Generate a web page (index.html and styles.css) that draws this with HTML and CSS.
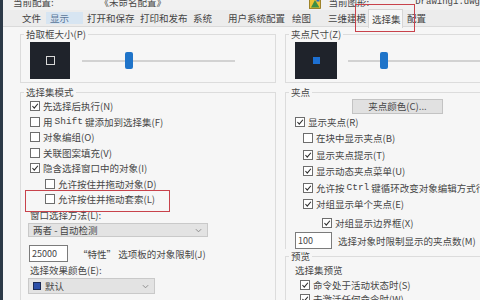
FILE: index.html
```html
<!DOCTYPE html>
<html lang="zh-CN">
<head>
<meta charset="utf-8">
<title>选项 - 选择集</title>
<link rel="stylesheet" href="styles.css">
</head>
<body>
<div class="page">
  <div class="hdr">
    <div class="hdr-in">
      <span class="h1">当前配置:</span>
      <span class="h2">《未命名配置》</span>
      <svg class="hicon" viewBox="0 0 12 12"><rect x="0.5" y="0.5" width="11" height="11" fill="#f0c234" stroke="#8a6d10" stroke-width="0.8"/><path d="M2 10.5 L6 3 L10.5 10.5 Z" fill="#3f8f45"/><rect x="7.5" y="1.5" width="3" height="3" fill="#2f6fc0"/></svg>
      <span class="h3">当前图形:</span>
      <span class="h4">Drawing1.dwg</span>
    </div>
  </div>

  <div class="tabs">
    <div class="tab">文件</div>
    <div class="tab hl">显示</div>
    <div class="tab">打开和保存</div>
    <div class="tab">打印和发布</div>
    <div class="tab">系统</div>
    <div class="tab">用户系统配置</div>
    <div class="tab">绘图</div>
    <div class="tab">三维建模</div>
    <div class="tab active">选择集</div>
    <div class="tab">配置</div>
  </div>

  <div class="content">
    <div class="col left">
      <div class="grp gtop">
        <div class="gt">拾取框大小(P)</div>
        <div class="size-row">
          <div class="preview pv1"><span class="pick"></span></div>
          <div class="slider s1"><span class="thumb t1"></span></div>
        </div>
      </div>

      <div class="grp gmain">
        <div class="gt">选择集模式</div>
        <div class="row"><span class="cb"><svg viewBox="0 0 10 10"><polyline points="1.8,5 4.1,7.6 8.6,2.2"/></svg></span>先选择后执行(N)</div>
        <div class="row"><span class="cb"></span>用 <span class="mono">Shift</span> 键添加到选择集(F)</div>
        <div class="row"><span class="cb"></span>对象编组(O)</div>
        <div class="row"><span class="cb"></span>关联图案填充(V)</div>
        <div class="row"><span class="cb"><svg viewBox="0 0 10 10"><polyline points="1.8,5 4.1,7.6 8.6,2.2"/></svg></span>隐含选择窗口中的对象(I)</div>
        <div class="row ind"><span class="cb"></span>允许按住并拖动对象(D)</div>
        <div class="row ind"><span class="cb"></span>允许按住并拖动套索(L)</div>
        <div class="row lbl">窗口选择方法(L):</div>
        <div class="dd dd1"><span>两者 - 自动检测</span><svg class="chev" viewBox="0 0 8 5"><polyline points="1,1 4,4 7,1"/></svg></div>
        <div class="inrow"><span class="inp i1">25000</span><span class="inlbl">“特性” 选项板的对象限制(J)</span></div>
        <div class="row lbl">选择效果颜色(E):</div>
        <div class="dd dd2"><span class="sw"></span><span>默认</span><svg class="chev" viewBox="0 0 8 5"><polyline points="1,1 4,4 7,1"/></svg></div>
      </div>
    </div>

    <div class="col right">
      <div class="grp gtop rg">
        <div class="gt">夹点尺寸(Z)</div>
        <div class="size-row">
          <div class="preview pv2"><span class="grip"></span></div>
          <div class="slider s2"><span class="thumb t2"></span></div>
        </div>
      </div>

      <div class="grp gmain rg">
        <div class="gt">夹点</div>
        <div class="btn">夹点颜色(C)...</div>
        <div class="row r1"><span class="cb"><svg viewBox="0 0 10 10"><polyline points="1.8,5 4.1,7.6 8.6,2.2"/></svg></span>显示夹点(R)</div>
        <div class="row r2"><span class="cb"></span>在块中显示夹点(B)</div>
        <div class="row r2"><span class="cb"><svg viewBox="0 0 10 10"><polyline points="1.8,5 4.1,7.6 8.6,2.2"/></svg></span>显示夹点提示(T)</div>
        <div class="row r2"><span class="cb"><svg viewBox="0 0 10 10"><polyline points="1.8,5 4.1,7.6 8.6,2.2"/></svg></span>显示动态夹点菜单(U)</div>
        <div class="row r2"><span class="cb"><svg viewBox="0 0 10 10"><polyline points="1.8,5 4.1,7.6 8.6,2.2"/></svg></span>允许按 <span class="mono">Ctrl</span> 键循环改变对象编辑方式行为(Y)</div>
        <div class="row r2"><span class="cb"><svg viewBox="0 0 10 10"><polyline points="1.8,5 4.1,7.6 8.6,2.2"/></svg></span>对组显示单个夹点(E)</div>
        <div class="row r3"><span class="cb"><svg viewBox="0 0 10 10"><polyline points="1.8,5 4.1,7.6 8.6,2.2"/></svg></span>对组显示边界框(X)</div>
        <div class="inrow r4"><span class="inp i2">100</span><span class="inlbl">选择对象时限制显示的夹点数(M)</span></div>
      </div>

      <div class="grp gprev rg">
        <div class="gt">预览</div>
        <div class="row sub">选择集预览</div>
        <div class="row r5"><span class="cb"><svg viewBox="0 0 10 10"><polyline points="1.8,5 4.1,7.6 8.6,2.2"/></svg></span>命令处于活动状态时(S)</div>
        <div class="row r5"><span class="cb"><svg viewBox="0 0 10 10"><polyline points="1.8,5 4.1,7.6 8.6,2.2"/></svg></span>未激活任何命令时(W)</div>
      </div>
    </div>
  </div>

  <div class="mark mark-tab"></div>
  <div class="mark mark-lasso"></div>
</div>
</body>
</html>
```

FILE: styles.css
```css
* { box-sizing: border-box; }

html, body {
  margin: 0;
  padding: 0;
  width: 480px;
  height: 300px;
  overflow: hidden;
}

body {
  font-family: "Noto Sans CJK SC", "Noto Sans", sans-serif;
  font-size: 9.5px;
  color: #464646;
  background: #f4f4f4;
}

.page {
  position: relative;
  width: 480px;
  height: 300px;
  overflow: hidden;
  border-left: 3px solid #2c3947;
  background: #f5f5f5;
}

/* header (cut at the top in the reference) */
.hdr {
  height: 10px;
  overflow: hidden;
  background: #f1f1f1;
}
.hdr-in {
  display: flex;
  align-items: center;
  height: 13px;
  margin-top: -4px;
  padding-left: 10px;
  line-height: 13px;
  white-space: nowrap;
}
.h1 { width: 87px; }
.h2 { width: 210px; }
.hicon { width: 12px; height: 12px; margin-right: 8px; margin-top: 1px; }
.h3 { width: 87px; }
.h4 { font-family: "Liberation Mono", monospace; font-size: 9px; }

/* tabs */
.tabs {
  display: flex;
  height: 17px;
  padding-left: 15px;
  background: #ececec;
  border-bottom: 1px solid #dadada;
  white-space: nowrap;
}
.tab {
  padding-left: 4px;
  line-height: 16px;
  color: #444444;
}
.tab:nth-child(1) { width: 28px; }
.tab:nth-child(2) { width: 37px; }
.tab:nth-child(3) { width: 53px; }
.tab:nth-child(4) { width: 53px; }
.tab:nth-child(5) { width: 35px; }
.tab:nth-child(6) { width: 64px; }
.tab:nth-child(7) { width: 36px; }
.tab:nth-child(8) { width: 44px; }
.tab:nth-child(9) { width: 35px; }
.tab:nth-child(10) { width: 40px; }
.tab.hl {
  color: #5a7598;
  background: linear-gradient(#d7e5f2, #d7e5f2) 0 2px / 100% 12px no-repeat;
}
.tab.active {
  background: #f7f7f7;
  margin-top: -1px;
  height: 19px;
  line-height: 19px;
  border: 1px solid #d6d6d6;
  border-bottom: none;
  padding-left: 3px;
}

/* content */
.content {
  display: flex;
  padding-left: 17px;
  gap: 9px;
  background: #f6f6f6;
  height: 273px;
}
.col { display: flex; flex-direction: column; }
.left { width: 256px; flex: none; }
.right { flex: 1; overflow: hidden; }

.grp {
  border: 1px solid #dcdcdc;
  padding-left: 9px;
}
.grp.rg { border-right: none; }
.gt {
  width: fit-content;
  height: 13px;
  line-height: 13px;
  margin: -7px 0 0 -6px;
  padding: 0 2px;
  background: #f6f6f6;
  white-space: nowrap;
}

.gtop { margin-top: 7px; padding-bottom: 3px; }
.gmain { margin-top: 8.5px; border-bottom: none; }
.left .gmain { flex: 1; }

.size-row {
  display: flex;
  align-items: center;
  margin-top: 1px;
  height: 37px;
}
.preview {
  height: 37px;
  background: #1f232b;
  display: flex;
  align-items: center;
  justify-content: center;
  flex: none;
}
.pv1 { width: 40px; }
.pv2 { width: 42px; }
.pick {
  width: 9px;
  height: 9px;
  border: 1px solid #d8d8d8;
}
.grip {
  width: 7px;
  height: 7px;
  background: #1d70d2;
}
.slider {
  height: 17px;
  flex: none;
  background: linear-gradient(#d2d2d2, #d2d2d2) 0 50% / 100% 2px no-repeat;
  display: flex;
}
.s1 { width: 153px; margin-left: 12px; }
.s2 { width: 140px; margin-left: 11px; }
.thumb {
  width: 8px;
  height: 17px;
  background: #1f74c9;
  border-radius: 2px;
}
.t1 { margin-left: 43px; }
.t2 { margin-left: 32px; }

.row {
  display: flex;
  align-items: center;
  height: 15.5px;
  white-space: nowrap;
}
.row.ind { padding-left: 15px; }
.row.lbl { padding-left: 0; }

.cb {
  width: 10px;
  height: 10px;
  flex: none;
  border: 1px solid #6d6d6d;
  background: #ffffff;
  margin-right: 3px;
  display: flex;
}
.cb svg { width: 8px; height: 8px; }
.cb polyline { fill: none; stroke: #2e2e2e; stroke-width: 1.4; }

.mono { font-family: "Liberation Mono", monospace; font-size: 9.5px; margin: 0 2px; }

.dd {
  display: flex;
  align-items: center;
  margin-left: -2px;
  background: #e3e3e3;
  border: 1px solid #c9c9c9;
  padding-left: 4px;
  padding-right: 5px;
  white-space: nowrap;
}
.dd span:last-of-type { flex: 1; }
.dd1 { width: 180px; height: 14px; margin-top: 0.5px; }
.dd2 { width: 127px; height: 16px; margin-top: 0.5px; }
.chev { width: 7px; height: 5px; }
.chev polyline { fill: none; stroke: #8a8a8a; stroke-width: 1.1; }
.sw {
  width: 8px;
  height: 8px;
  background: #2c4fa8;
  border: 1px solid #1b2a55;
  margin-right: 4px;
  flex: none;
}

.inrow {
  display: flex;
  align-items: center;
  margin-top: 8px;
  white-space: nowrap;
}
.inp {
  height: 17px;
  background: #ffffff;
  border: 1px solid #7b7b7b;
  padding-left: 2px;
  line-height: 15px;
  font-size: 9px;
  flex: none;
}
.i1 { width: 39px; margin-left: -1px; }
.i2 { width: 37px; }
.inlbl { margin-left: 10px; }
.r4 .inlbl { margin-left: 6px; }

.btn {
  width: 91px;
  height: 15px;
  margin: 0.5px 0 0 57px;
  background: #e1e1e1;
  border: 1px solid #c3c3c3;
  text-align: center;
  line-height: 13px;
}
.row.r1 { height: 16px; }
.row.r2 { height: 16.5px; padding-left: 8px; }
.row.r3 { height: 16.5px; padding-left: 27px; margin-top: 2px; }
.inrow.r4 { margin-top: 1px; }

.gprev { margin-top: 7px; flex: 1; border-bottom: none; }
.row.sub { height: 14.5px; }
.row.r5 { height: 14px; padding-left: 5px; }

/* red annotation boxes over the dialog */
.mark {
  position: absolute;
  border: 1.5px solid #c8424b;
}
.mark-tab { left: 352px; top: 4px; width: 60px; height: 28px; }
.mark-lasso { left: 22px; top: 190px; width: 145px; height: 22px; }
```
